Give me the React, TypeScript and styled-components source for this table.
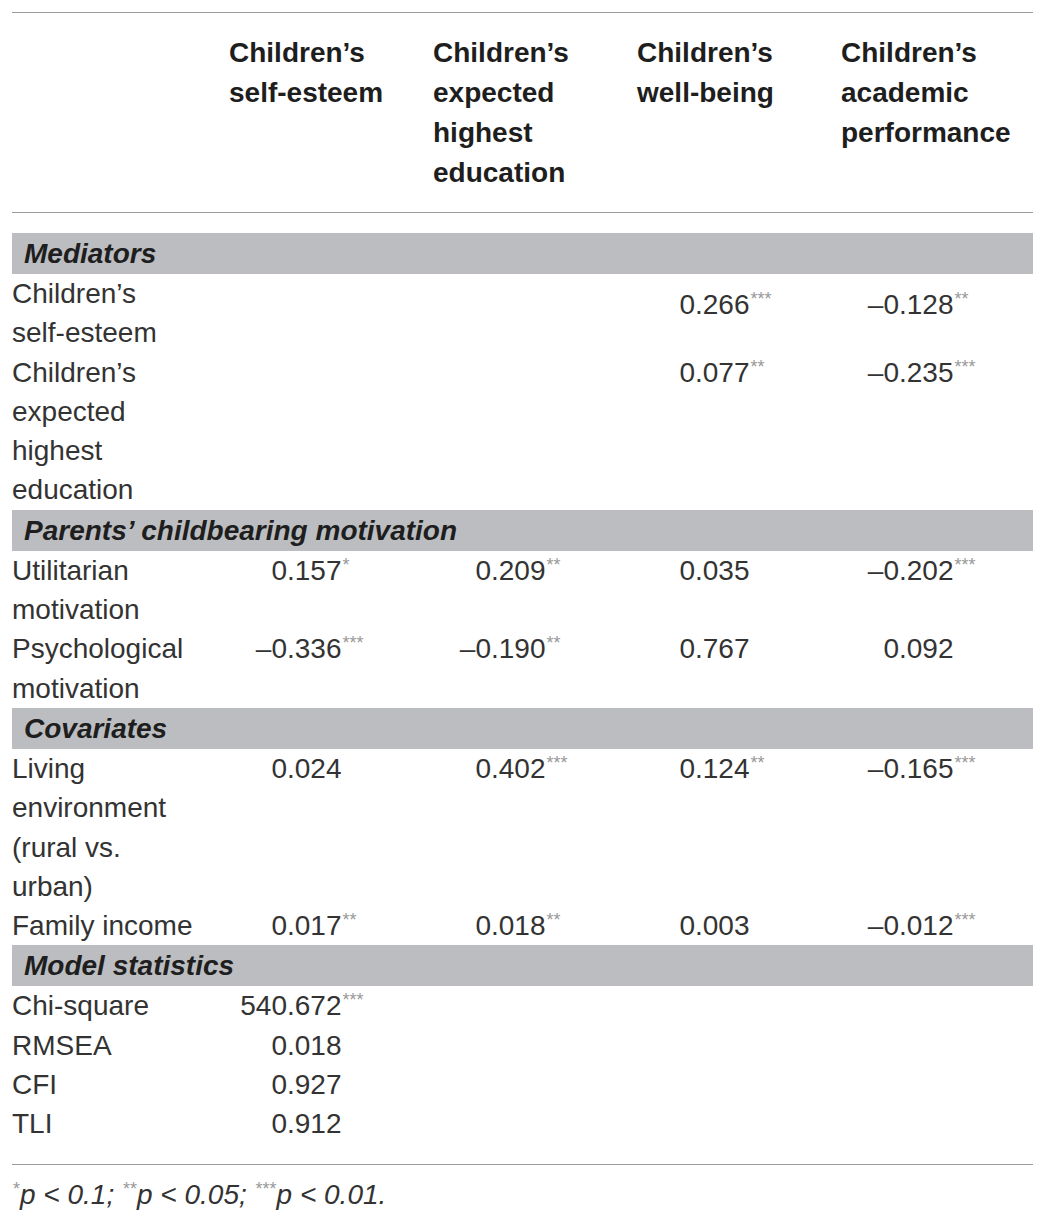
import React from "react";
import styled, { createGlobalStyle } from "styled-components";

const GlobalStyle = createGlobalStyle`
  html, body {
    margin: 0;
    padding: 0;
    background: #ffffff;
  }
  body {
    font-family: "Liberation Sans", Arial, Helvetica, sans-serif;
    color: #222;
  }
`;

// label column + four value columns
const COLS = "205px repeat(4, 204px)";

const Page = styled.div`
  padding: 12px 9px 8px 12px;
  width: 1021px;
`;

const Rule = styled.div`
  height: 0;
  border-top: 1.5px solid #9d9d9d;
`;

const HeaderRow = styled.div`
  display: grid;
  grid-template-columns: ${COLS};
  padding: 20px 0 19px;
  font-size: 28px;
  line-height: 40px;
  font-weight: bold;
  color: #1e1e1e;
  white-space: nowrap;
`;

const HeaderCell = styled.div`
  padding-left: 12px;
`;

const Body = styled.div`
  padding: 20px 0 20px;
`;

const Band = styled.div`
  background: #bcbdc0;
  height: 41px;
  line-height: 42px;
  padding-left: 12px;
  font-size: 28px;
  font-weight: bold;
  font-style: italic;
  color: #1e1e1e;
`;

const DataRow = styled.div`
  display: grid;
  grid-template-columns: ${COLS};
  font-size: 28px;
  line-height: 39.3px;
  color: #333;
  white-space: nowrap;
`;

const Label = styled.div``;

const ValueCell = styled.div<{ $drop?: boolean }>`
  padding-left: 12px;
  margin-top: ${(p) => (p.$drop ? "11px" : "0")};
`;

const IntPart = styled.span`
  display: inline-block;
  width: 58px;
  text-align: right;
`;

const Stars = styled.span`
  position: relative;
  top: -9px;
  line-height: 0;
  font-size: 18px;
  color: #999;
  margin-left: 1px;
  font-style: normal;
`;

const Footnote = styled.div`
  padding-top: 10px;
  font-size: 28px;
  line-height: 40px;
  font-style: italic;
  color: #333;
`;

type Row = { label: string[]; values: (string | null)[]; drop?: boolean };
type Section = { title: string; rows: Row[] };

const headers = [
  ["Children’s", "self-esteem"],
  ["Children’s", "expected", "highest", "education"],
  ["Children’s", "well-being"],
  ["Children’s", "academic", "performance"],
];

const sections: Section[] = [
  {
    title: "Mediators",
    rows: [
      { label: ["Children’s", "self-esteem"], values: [null, null, "0.266***", "–0.128**"], drop: true },
      { label: ["Children’s", "expected", "highest", "education"], values: [null, null, "0.077**", "–0.235***"] },
    ],
  },
  {
    title: "Parents’ childbearing motivation",
    rows: [
      { label: ["Utilitarian", "motivation"], values: ["0.157*", "0.209**", "0.035", "–0.202***"] },
      { label: ["Psychological", "motivation"], values: ["–0.336***", "–0.190**", "0.767", "0.092"] },
    ],
  },
  {
    title: "Covariates",
    rows: [
      { label: ["Living", "environment", "(rural vs.", "urban)"], values: ["0.024", "0.402***", "0.124**", "–0.165***"] },
      { label: ["Family income"], values: ["0.017**", "0.018**", "0.003", "–0.012***"] },
    ],
  },
  {
    title: "Model statistics",
    rows: [
      { label: ["Chi-square"], values: ["540.672***", null, null, null] },
      { label: ["RMSEA"], values: ["0.018", null, null, null] },
      { label: ["CFI"], values: ["0.927", null, null, null] },
      { label: ["TLI"], values: ["0.912", null, null, null] },
    ],
  },
];

const Lines = ({ lines }: { lines: string[] }) => (
  <>
    {lines.map((l, i) => (
      <React.Fragment key={i}>
        {i > 0 && <br />}
        {l}
      </React.Fragment>
    ))}
  </>
);

// decimal-aligned number with superscript significance stars
const Num = ({ value }: { value: string }) => {
  const m = value.match(/^([^.]+)(\.\d+)(\**)$/);
  if (!m) return <>{value}</>;
  return (
    <>
      <IntPart>{m[1]}</IntPart>
      {m[2]}
      {m[3] && <Stars>{m[3]}</Stars>}
    </>
  );
};

export default function App() {
  return (
    <Page>
      <GlobalStyle />
      <Rule />
      <HeaderRow>
        <div />
        {headers.map((h, i) => (
          <HeaderCell key={i}>
            <Lines lines={h} />
          </HeaderCell>
        ))}
      </HeaderRow>
      <Rule />
      <Body>
        {sections.map((s) => (
          <React.Fragment key={s.title}>
            <Band>{s.title}</Band>
            {s.rows.map((r, ri) => (
              <DataRow key={ri}>
                <Label>
                  <Lines lines={r.label} />
                </Label>
                {r.values.map((v, vi) => (
                  <ValueCell key={vi} $drop={r.drop}>
                    {v && <Num value={v} />}
                  </ValueCell>
                ))}
              </DataRow>
            ))}
          </React.Fragment>
        ))}
      </Body>
      <Rule />
      <Footnote>
        <Stars>*</Stars>p &lt; 0.1; <Stars>**</Stars>p &lt; 0.05; <Stars>***</Stars>p &lt; 0.01.
      </Footnote>
    </Page>
  );
}
